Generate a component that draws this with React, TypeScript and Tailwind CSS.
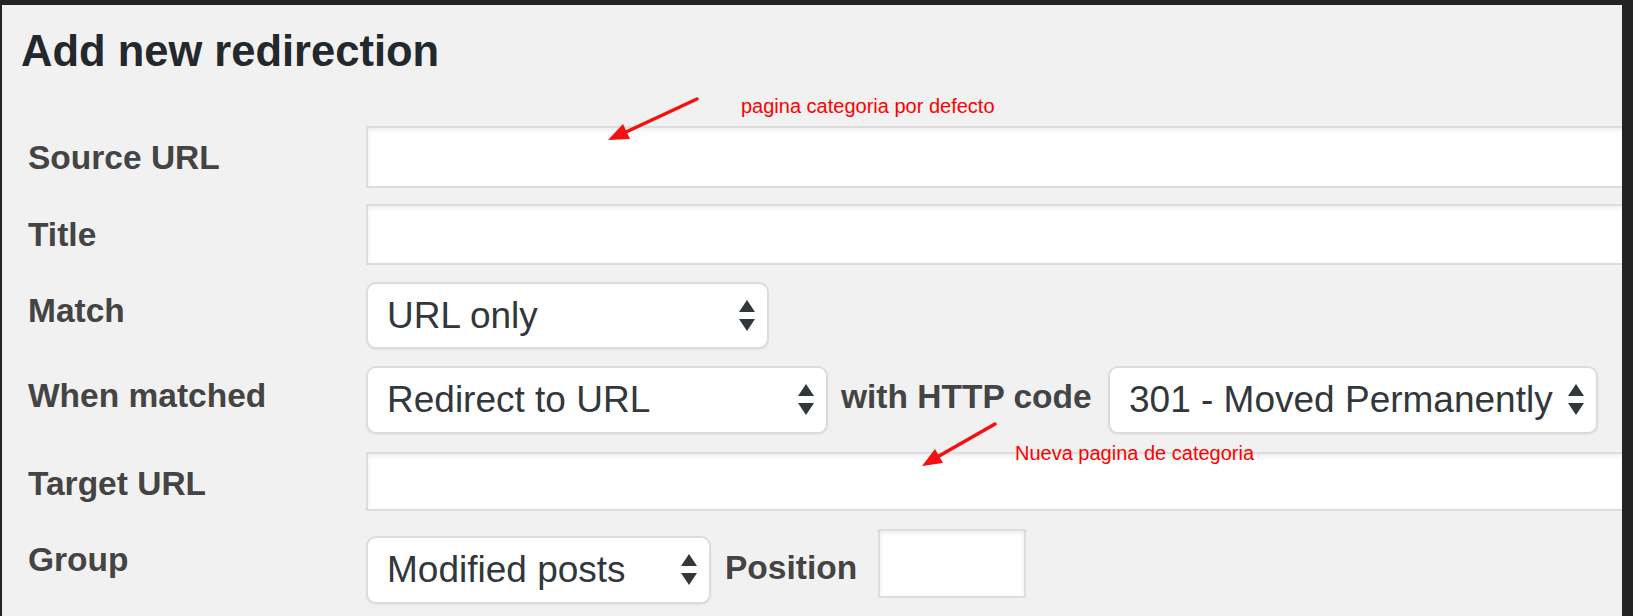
import React from "react";

const SelectArrows = () => (
  <svg width="16" height="32" viewBox="0 0 16 32" className="shrink-0">
    <polygon points="0,12 8,0 16,12" fill="#32373c" />
    <polygon points="0,19 16,19 8,31" fill="#32373c" />
  </svg>
);

const Select = ({ value, className }: { value: string; className: string }) => (
  <div
    className={`flex items-center justify-between shrink-0 bg-white border-2 border-[#dcdcdc] rounded-[10px] pl-[19px] pr-[12px] shadow-[0_1px_2px_rgba(0,0,0,0.06)] ${className}`}
  >
    <span className="text-[37px] leading-[40px] text-[#32373c] whitespace-nowrap">{value}</span>
    <SelectArrows />
  </div>
);

const TextInput = ({ className }: { className: string }) => (
  <div
    className={`shrink-0 bg-white border-2 border-[#dddddd] shadow-[inset_0_2px_4px_rgba(0,0,0,0.08)] ${className}`}
  />
);

const Label = ({ children, className }: { children: React.ReactNode; className: string }) => (
  <div className={`w-[338px] shrink-0 text-[33.5px] leading-[38px] font-bold text-[#444444] ${className}`}>
    {children}
  </div>
);

export default function App() {
  return (
    <div className="relative w-[1633px] h-[616px] bg-[#232323] pt-[5px] pl-[2px] pr-[11px] overflow-hidden font-['Liberation_Sans',Arial,sans-serif]">
      <div className="h-full bg-[#f1f1f1] overflow-hidden">
        <h2 className="ml-[19px] mt-[21px] text-[43.5px] leading-[50px] font-bold text-[#23282d]">
          Add new redirection
        </h2>

        {/* Source URL */}
        <div className="flex items-start pl-[26px] mt-[50px]">
          <Label className="mt-[13px]">Source URL</Label>
          <TextInput className="w-[1300px] h-[62px]" />
        </div>

        {/* Title */}
        <div className="flex items-start pl-[26px] mt-[16px]">
          <Label className="mt-[12px]">Title</Label>
          <TextInput className="w-[1300px] h-[61px]" />
        </div>

        {/* Match */}
        <div className="flex items-start pl-[26px] mt-[17px]">
          <Label className="mt-[10px]">Match</Label>
          <Select value="URL only" className="w-[403px] h-[67px]" />
        </div>

        {/* When matched */}
        <div className="flex items-start pl-[26px] mt-[17px]">
          <Label className="mt-[11px]">When matched</Label>
          <Select value="Redirect to URL" className="w-[462px] h-[68px]" />
          <span className="w-[253px] ml-[13px] mt-[12px] shrink-0 text-[33.5px] leading-[38px] font-bold text-[#444444] whitespace-nowrap">
            with HTTP code
          </span>
          <Select value="301 - Moved Permanently" className="ml-[14px] w-[490px] h-[68px]" />
        </div>

        {/* Target URL */}
        <div className="flex items-start pl-[26px] mt-[18px]">
          <Label className="mt-[13px]">Target URL</Label>
          <TextInput className="w-[1300px] h-[59px]" />
        </div>

        {/* Group */}
        <div className="flex items-start pl-[26px] mt-[18px]">
          <Label className="mt-[12px]">Group</Label>
          <Select value="Modified posts" className="mt-[7px] w-[345px] h-[68px]" />
          <span className="w-[127px] ml-[14px] mt-[20px] shrink-0 text-[33.5px] leading-[38px] font-bold text-[#444444] whitespace-nowrap">
            Position
          </span>
          <TextInput className="ml-[26px] w-[148px] h-[69px]" />
        </div>
      </div>

      {/* annotations */}
      <svg className="absolute inset-0 pointer-events-none" width="1633" height="616">
        <line x1="697" y1="99" x2="626" y2="132" stroke="#f50f0f" strokeWidth="3.5" strokeLinecap="round" />
        <polygon points="608,140 630,139 623,124" fill="#f50f0f" />
        <line x1="995" y1="424" x2="939" y2="456" stroke="#f50f0f" strokeWidth="3.5" strokeLinecap="round" />
        <polygon points="922,466 943,463 935,449" fill="#f50f0f" />
      </svg>
      <span className="absolute left-[741px] top-[95px] text-[20px] leading-[23px] text-[#ff0000] whitespace-nowrap">
        pagina categoria por defecto
      </span>
      <span className="absolute left-[1015px] top-[442px] text-[20px] leading-[23px] text-[#ff0000] whitespace-nowrap">
        Nueva pagina de categoria
      </span>
    </div>
  );
}
